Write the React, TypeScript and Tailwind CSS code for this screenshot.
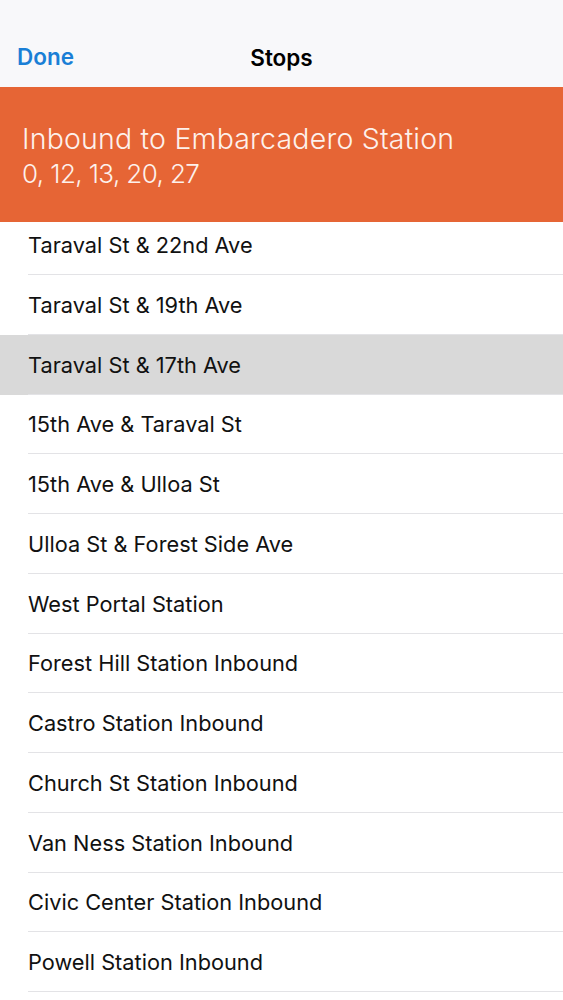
import React from 'react';

const stops = [
    'Taraval St & 22nd Ave',
    'Taraval St & 19th Ave',
    'Taraval St & 17th Ave',
    '15th Ave & Taraval St',
    '15th Ave & Ulloa St',
    'Ulloa St & Forest Side Ave',
    'West Portal Station',
    'Forest Hill Station Inbound',
    'Castro Station Inbound',
    'Church St Station Inbound',
    'Van Ness Station Inbound',
    'Civic Center Station Inbound',
    'Powell Station Inbound',
];

export default function App() {
    const selected = 2;

    return (
        <div className="w-[563px] h-[1000px] overflow-hidden bg-white font-['Inter',sans-serif]">
            <div className="relative flex h-[87px] items-center bg-[#f8f8fa] pt-[28px]">
                <button className="absolute left-[17px] top-[44px] text-[22.5px] font-semibold leading-[26px] text-[#1a7fd6]">
                    Done
                </button>
                <h1 className="w-full text-center text-[22.5px] font-semibold leading-[26px] text-black">
                    Stops
                </h1>
            </div>

            <div className="flex h-[135px] flex-col justify-center bg-[#e66535] px-[22px] pt-[2px] font-light leading-[35px] text-[#fdf1ec]">
                <div className="text-[28.5px] tracking-[0.2px]">Inbound to Embarcadero Station</div>
                <div className="text-[26px] tracking-[-0.6px]">0, 12, 13, 20, 27</div>
            </div>

            <ul>
                {stops.map((stop, i) => (
                    <li key={stop}
                        className={(i === selected ? 'bg-[#d9d9d9] ' : 'bg-white ') +
                            (i === 0 ? 'h-[53px]' : 'h-[59.75px]')}>
                        <div className={'ml-[28px] flex h-full items-center border-b border-[#e3e3e6] text-[21.75px] leading-[26px] text-[#111] ' +
                            (i === 0 ? 'pb-[7px]' : 'pt-px')}>
                            {stop}
                        </div>
                    </li>
                ))}
            </ul>
        </div>
    )
}
